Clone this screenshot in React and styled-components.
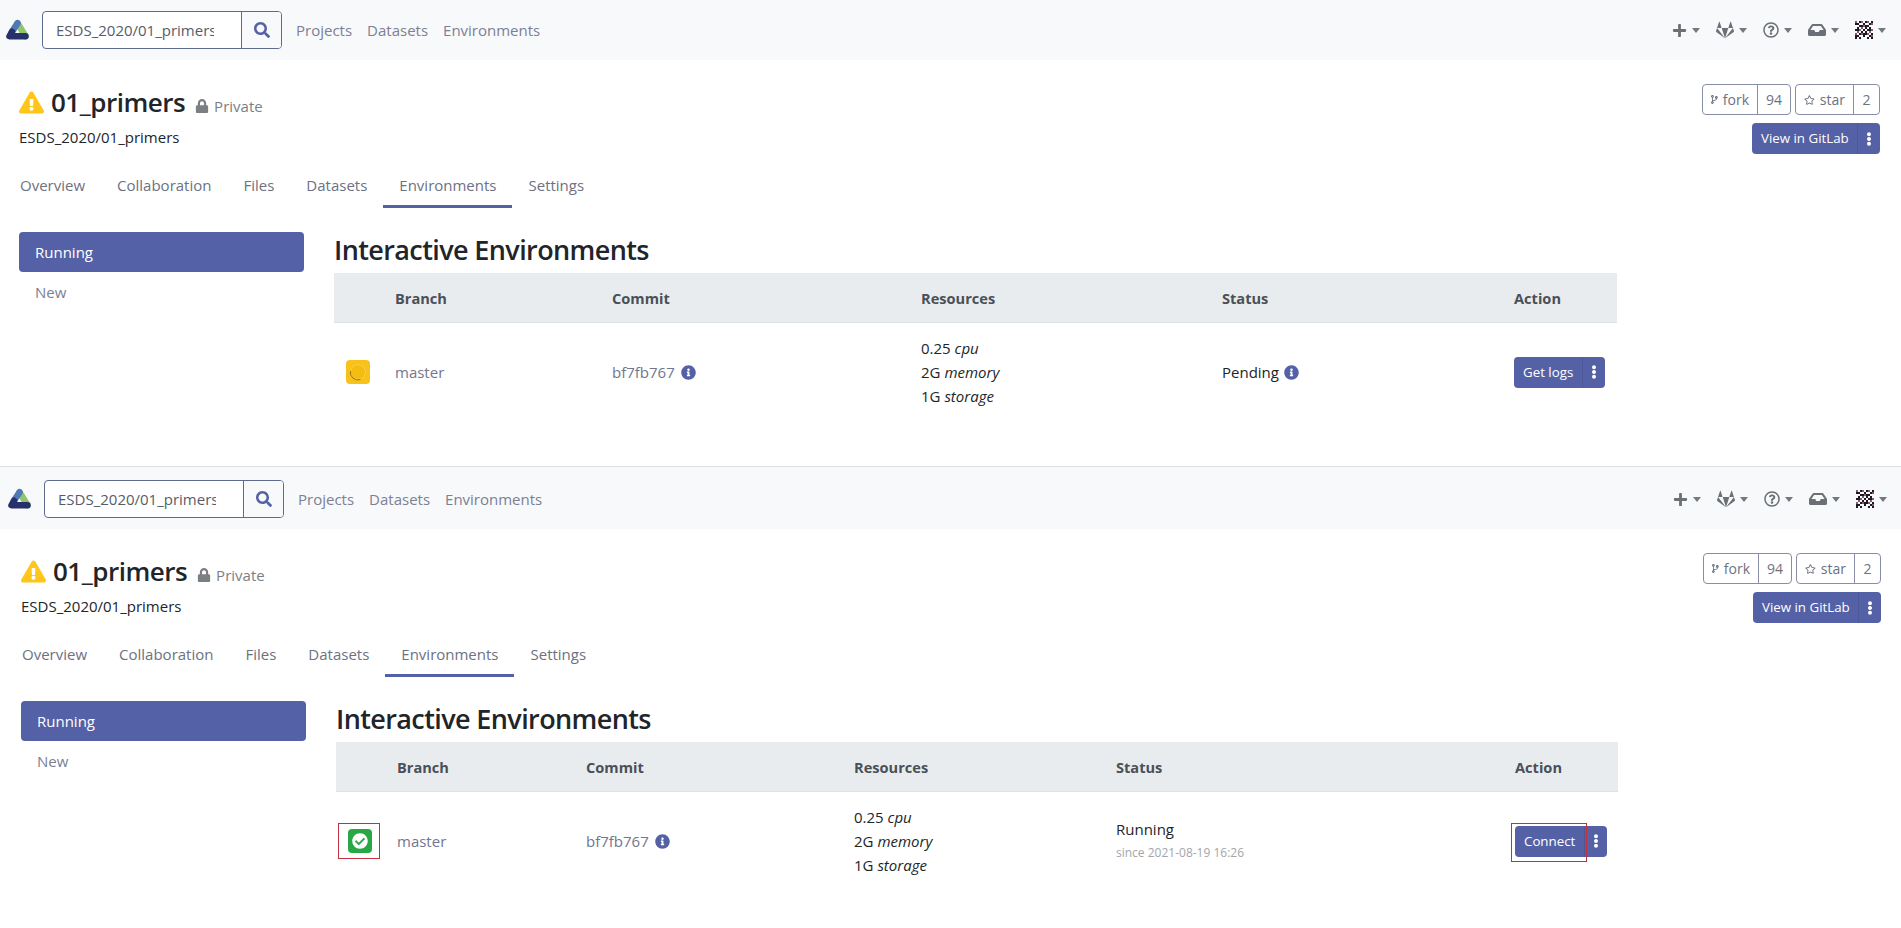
import React from 'react';
import styled, { createGlobalStyle } from 'styled-components';
import {
  FaCheckCircle,
  FaCodeBranch,
  FaEllipsisV,
  FaExclamationTriangle,
  FaGitlab,
  FaInbox,
  FaInfoCircle,
  FaLock,
  FaPlus,
  FaRegQuestionCircle,
  FaRegStar,
  FaSearch,
} from 'react-icons/fa';

const primary = '#5561a6';

const GlobalStyle = createGlobalStyle`
  html, body {
    margin: 0;
    padding: 0;
    background: #fff;
  }
  body {
    font-family: "Open Sans", "Noto Sans", sans-serif;
    font-size: 16px;
    line-height: 24px;
    color: #212529;
  }
  * {
    box-sizing: border-box;
  }
`;

const Frame = styled.section`
  border-bottom: ${(p) => (p.$divider ? '1px solid #dcdee0' : 'none')};
  padding-bottom: ${(p) => (p.$divider ? '45px' : '0')};
`;

const TopBar = styled.nav`
  display: flex;
  align-items: center;
  background: #f8f9fa;
  height: ${(p) => p.$height}px;
  padding: ${(p) => p.$top}px ${(p) => p.$right - 6}px 10px ${(p) => p.$left - 14}px;
`;

const Logo = styled.svg`
  width: 25px;
  height: 24px;
  margin-right: 12px;
  flex: none;
`;

const SearchBox = styled.div`
  display: flex;
  width: 240px;
  height: 38px;
  border: 1px solid #5f6a8f;
  border-radius: 4px;
  background: #fff;
  overflow: hidden;
  margin-right: 14px;
`;

const SearchInput = styled.input`
  width: 198px;
  border: 0;
  outline: 0;
  background: transparent;
  padding: 0 27px 0 13px;
  font: 15px "Open Sans", sans-serif;
  color: #565d68;
`;

const SearchButton = styled.button`
  flex: 1;
  border: 0;
  border-left: 1px solid #5f6a8f;
  background: #f8f9fa;
  color: ${primary};
  font-size: 16px;
  display: flex;
  align-items: center;
  justify-content: center;
  padding: 0;
`;

const NavLinks = styled.div`
  display: flex;
  gap: 15px;
`;

const NavLink = styled.a`
  color: #7b8094;
  font-size: 15px;
`;

const NavIcons = styled.div`
  margin-left: auto;
  display: flex;
  align-items: center;
  gap: 16px;
  color: #6b7076;
`;

const NavIcon = styled.span`
  display: flex;
  align-items: center;
  gap: 5px;
  font-size: ${(p) => p.$size || 17}px;

  &::after {
    content: '';
    border-left: 4px solid transparent;
    border-right: 4px solid transparent;
    border-top: 5px solid #74797f;
  }
`;

const Identicon = styled.svg`
  width: 18px;
  height: 18px;
`;

const Content = styled.div`
  padding: 0 ${(p) => p.$right}px 0 ${(p) => p.$left}px;
`;

const ProjectHeader = styled.header`
  display: flex;
  justify-content: space-between;
  padding-top: 24px;
  margin-bottom: 11px;
`;

const TitleRow = styled.div`
  display: flex;
  align-items: center;
  height: 36px;
`;

const WarnIcon = styled(FaExclamationTriangle)`
  color: #ffc61a;
  width: 25px;
  height: 23px;
  margin-right: 7px;
`;

const Title = styled.h1`
  margin: 0 10px 0 0;
  font-size: 26px;
  font-weight: 600;
  letter-spacing: -0.5px;
  line-height: 36px;
`;

const Visibility = styled.span`
  display: flex;
  align-items: center;
  gap: 5px;
  font-size: 15px;
  color: #7b7f84;
  padding-top: 8px;
`;

const PathLine = styled.div`
  font-size: 15px;
  line-height: 24px;
  margin-top: 5px;
`;

const HeaderActions = styled.div`
  display: flex;
  flex-direction: column;
  align-items: flex-end;
  gap: 8px;
`;

const Counters = styled.div`
  display: flex;
  gap: 4px;
`;

const Counter = styled.div`
  display: flex;
  height: 31px;
  border: 1px solid #888ea3;
  border-radius: 4px;
  font-size: 14px;
  line-height: 29px;
  color: #6c7280;
`;

const CounterLabel = styled.span`
  display: flex;
  align-items: center;
  gap: 5px;
  padding: 0 8px;
  width: ${(p) => p.$width}px;
  border-right: 1px solid #888ea3;
`;

const CounterValue = styled.span`
  width: ${(p) => p.$width}px;
  text-align: center;
`;

const SplitButton = styled.div`
  display: inline-flex;
  justify-self: start;
  position: relative;
  height: 31px;
  border-radius: 4px;
  background: ${primary};
  color: #fff;
  font-size: 13.3px;
  line-height: 31px;
`;

const SplitMain = styled.span`
  padding: 0 9px;
  width: ${(p) => p.$width}px;
  border-right: 1px solid #4d5897;
  white-space: nowrap;
`;

const SplitMore = styled.span`
  width: 22px;
  display: flex;
  align-items: center;
  justify-content: center;
  font-size: 14px;
`;

const Tabs = styled.div`
  display: flex;
  margin-left: -15px;
`;

const Tab = styled.a`
  padding: 8px 16px 8px;
  height: 43px;
  border-bottom: 3px solid ${(p) => (p.$active ? primary : 'transparent')};
  color: #6d7183;
  font-size: 15px;
`;

const Body = styled.div`
  display: flex;
  margin-top: 24px;
`;

const Side = styled.aside`
  width: 285px;
  margin-right: 30px;
  flex: none;
`;

const SideLink = styled.div`
  height: 40px;
  line-height: 40px;
  padding-left: 16px;
  border-radius: 4px;
  font-size: 15px;
  background: ${(p) => (p.$active ? primary : 'transparent')};
  color: ${(p) => (p.$active ? '#fff' : '#7b8094')};
`;

const Heading = styled.h2`
  margin: 0 0 5px;
  font-size: 27px;
  font-weight: 600;
  letter-spacing: -0.6px;
  line-height: 36px;
`;

const Grid = styled.div`
  display: grid;
  grid-template-columns: ${(p) => p.$cols};
  align-items: center;
`;

const HeadRow = styled(Grid)`
  height: 50px;
  background: #e9ecef;
  border-bottom: 1px solid #dee2e6;
  font-size: 14.6px;
  font-weight: 700;
  color: #495057;
`;

const Row = styled(Grid)`
  height: 98px;
  font-size: 15px;
`;

const StatusCell = styled.div`
  position: relative;
  width: 24px;
  height: 24px;
  margin-left: 12px;
`;

const StatusBadge = styled.div`
  width: 24px;
  height: 24px;
  border-radius: 4px;
  display: flex;
  align-items: center;
  justify-content: center;
  color: #fff;
  font-size: 16px;
  background: ${(p) => p.$color};
`;

const Spinner = styled.svg`
  width: 18px;
  height: 18px;
`;

const Marker = styled.span`
  position: absolute;
  top: ${(p) => p.$t}px;
  right: ${(p) => p.$r}px;
  bottom: ${(p) => p.$b}px;
  left: ${(p) => p.$l}px;
  border: 1px solid #c0303f;
  pointer-events: none;
`;

const Muted = styled.span`
  color: #72768f;
  display: inline-flex;
  align-items: center;
  gap: 6px;
`;

const Info = styled(FaInfoCircle)`
  color: ${primary};
  font-size: 15px;
`;

const Plain = styled.span`
  display: inline-flex;
  align-items: center;
  gap: 5px;
`;

const Small = styled.div`
  font-size: 12px;
  color: #a3a6aa;
`;

const PIXELS = [
  '101101101',
  '110010011',
  '001111100',
  '010101010',
  '111010111',
  '010101010',
  '101111101',
  '110010011',
  '101000101',
];

function Avatar() {
  return (
    <Identicon viewBox="0 0 9 9" shapeRendering="crispEdges">
      {PIXELS.map((row, y) =>
        row.split('').map((c, x) =>
          c === '1' ? (
            <rect
              key={`${x}-${y}`}
              x={x}
              y={y}
              width="1"
              height="1"
              fill={(x + y) % 3 === 0 ? '#8a5a72' : '#1d1a20'}
            />
          ) : null
        )
      )}
    </Identicon>
  );
}

function RenkuLogo() {
  return (
    <Logo viewBox="0 0 50 47" fill="none" strokeWidth="13" strokeLinecap="round">
      <path d="M25 10L41 36" stroke="#8fc46a" />
      <path d="M25 10L14 27" stroke="#4f78b8" />
      <path d="M14 27L9 36L41 36" stroke="#26306b" strokeLinejoin="round" />
    </Logo>
  );
}

function Page({ left, right, navTop, navHeight, cols, divider, children }) {
  return (
    <Frame $divider={divider}>
      <TopBar $top={navTop} $height={navHeight} $left={left} $right={right}>
        <RenkuLogo />
        <SearchBox>
          <SearchInput readOnly value="ESDS_2020/01_primers" />
          <SearchButton>
            <FaSearch />
          </SearchButton>
        </SearchBox>
        <NavLinks>
          <NavLink>Projects</NavLink>
          <NavLink>Datasets</NavLink>
          <NavLink>Environments</NavLink>
        </NavLinks>
        <NavIcons>
          <NavIcon $size={15}><FaPlus /></NavIcon>
          <NavIcon $size={18}><FaGitlab /></NavIcon>
          <NavIcon $size={16}><FaRegQuestionCircle /></NavIcon>
          <NavIcon $size={18}><FaInbox /></NavIcon>
          <NavIcon><Avatar /></NavIcon>
        </NavIcons>
      </TopBar>
      <Content $left={left} $right={right}>
        <ProjectHeader>
          <div>
            <TitleRow>
              <WarnIcon />
              <Title>01_primers</Title>
              <Visibility>
                <FaLock size={14} />
                Private
              </Visibility>
            </TitleRow>
            <PathLine>ESDS_2020/01_primers</PathLine>
          </div>
          <HeaderActions>
            <Counters>
              <Counter>
                <CounterLabel $width={55}>
                  <FaCodeBranch size={15} />
                  fork
                </CounterLabel>
                <CounterValue $width={32}>94</CounterValue>
              </Counter>
              <Counter>
                <CounterLabel $width={58}>
                  <FaRegStar size={16} />
                  star
                </CounterLabel>
                <CounterValue $width={25}>2</CounterValue>
              </Counter>
            </Counters>
            <SplitButton>
              <SplitMain $width={106}>View in GitLab</SplitMain>
              <SplitMore><FaEllipsisV /></SplitMore>
            </SplitButton>
          </HeaderActions>
        </ProjectHeader>
        <Tabs>
          <Tab>Overview</Tab>
          <Tab>Collaboration</Tab>
          <Tab>Files</Tab>
          <Tab>Datasets</Tab>
          <Tab $active>Environments</Tab>
          <Tab>Settings</Tab>
        </Tabs>
        <Body>
          <Side>
            <SideLink $active>Running</SideLink>
            <SideLink>New</SideLink>
          </Side>
          <main>
            <Heading>Interactive Environments</Heading>
            <HeadRow $cols={cols}>
              <span />
              <span>Branch</span>
              <span>Commit</span>
              <span>Resources</span>
              <span>Status</span>
              <span>Action</span>
            </HeadRow>
            <Row $cols={cols}>
              {children}
            </Row>
          </main>
        </Body>
      </Content>
    </Frame>
  );
}

function Resources() {
  return (
    <div>
      <div>0.25 <em>cpu</em></div>
      <div>2G <em>memory</em></div>
      <div>1G <em>storage</em></div>
    </div>
  );
}

function Commit() {
  return (
    <Muted>
      bf7fb767 <Info />
    </Muted>
  );
}

export default function App() {
  return (
    <>
      <GlobalStyle />
      <Page
        divider
        left={19}
        right={21}
        navTop={10}
        navHeight={60}
        cols="61px 217px 309px 301px 292px 103px"
      >
        <StatusCell>
          <StatusBadge $color="#f9c21a">
            <Spinner viewBox="0 0 18 18">
              <circle cx="9" cy="9" r="7.5" fill="#f5bd12" stroke="#f7cf4d" strokeWidth="1" />
              <path d="M1.5 8a7.5 7.5 0 0 0 10 8.5" fill="none" stroke="#8f7a1f" strokeWidth="1" />
            </Spinner>
          </StatusBadge>
        </StatusCell>
        <Muted>master</Muted>
        <Commit />
        <Resources />
        <Plain>
          Pending <Info />
        </Plain>
        <SplitButton>
          <SplitMain $width={69}>Get logs</SplitMain>
          <SplitMore><FaEllipsisV /></SplitMore>
        </SplitButton>
      </Page>
      <Page
        left={21}
        right={20}
        navTop={12}
        navHeight={62}
        cols="61px 189px 268px 262px 399px 103px"
      >
        <StatusCell>
          <StatusBadge $color="#28a745">
            <FaCheckCircle />
          </StatusBadge>
          <Marker $t={-6} $r={-8} $b={-6} $l={-10} />
        </StatusCell>
        <Muted>master</Muted>
        <Commit />
        <Resources />
        <div>
          Running
          <Small>since 2021-08-19 16:26</Small>
        </div>
        <SplitButton>
          <SplitMain $width={70}>Connect</SplitMain>
          <SplitMore><FaEllipsisV /></SplitMore>
          <Marker $t={-3} $r={20} $b={-5} $l={-4} />
        </SplitButton>
      </Page>
    </>
  );
}
